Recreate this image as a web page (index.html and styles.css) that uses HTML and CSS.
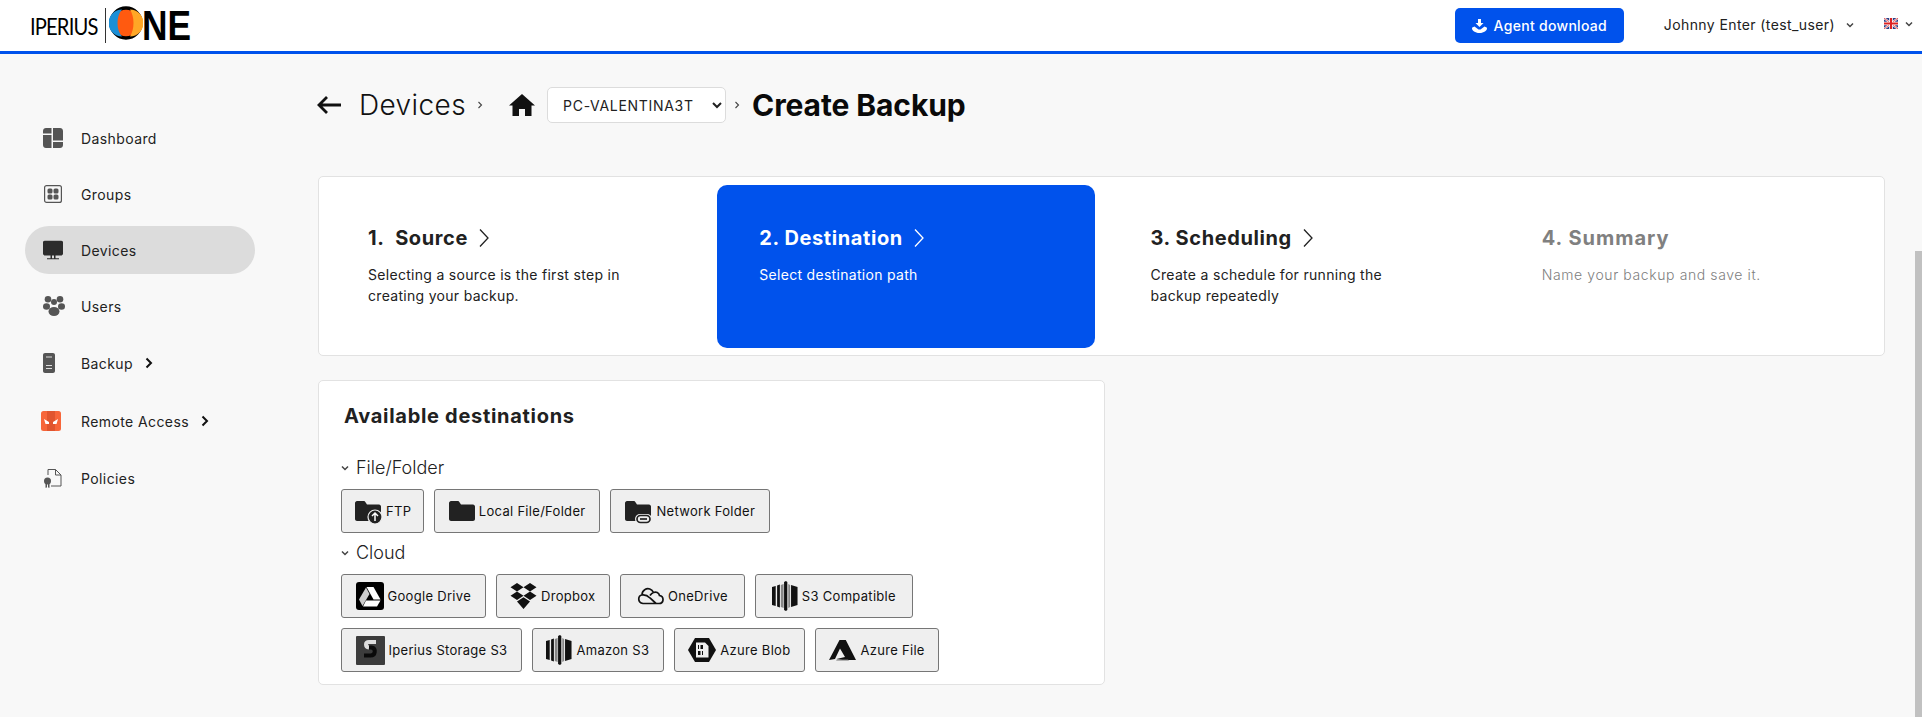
FILE: index.html
```html
<!DOCTYPE html>
<html lang="en">
<head>
  <meta charset="UTF-8" />
  <meta name="viewport" content="width=device-width, initial-scale=1.0"/>
  <title>Iperius One - Create Backup</title>
  <link rel="stylesheet" href="styles.css">
</head>
<body>
  <svg class="sprites" aria-hidden="true">
    <symbol id="s3" viewBox="0 0 28 30" preserveAspectRatio="none">
      <path fill="#111" d="M0 6l4-1v20l-4-1zM5.500 4.500l3-1v23l-3-1z"/>
      <path fill="#888" d="M9.500 4l3-1v24l-3-1z"/>
      <path fill="#111" d="M13 1l2-1 1.500 1v28l-1.500 1-2-1z"/>
      <path fill="#888" d="M17.500 3l2 1v22l-2 1z"/>
      <path fill="#111" d="M20.500 4l7 2v18l-7 2z"/>
    </symbol>
    <symbol id="tiny-down" viewBox="0 0 10 10">
      <path fill="none" stroke="currentColor" stroke-width="1.500" d="M2 3.500l3 3 3-3"/>
    </symbol>
    <symbol id="tiny-right" viewBox="0 0 10 10">
      <path fill="none" stroke="currentColor" stroke-width="1.100" d="M3.500 2l3 3-3 3"/>
    </symbol>
    <symbol id="step-arrow" viewBox="0 0 12 20">
      <path fill="none" stroke="currentColor" stroke-width="1.300" d="M2 1.500l8 8.500-8 8.500"/>
    </symbol>
    <symbol id="nav-arrow" viewBox="0 0 8 12">
      <path fill="none" stroke="currentColor" stroke-width="2" d="M1.500 1.500L6 6l-4.500 4.500"/>
    </symbol>
    <symbol id="folder" viewBox="0 0 26 20">
      <path fill="#222" d="M2 0h6.500c1 0 1.500.5 2 1.200L12 3.500h12c1 0 2 1 2 2V18c0 1-1 2-2 2H2c-1 0-2-1-2-2V2C0 1 1 0 2 0z"/>
    </symbol>
  </svg>

  <div class="topbar">
    <a class="logo" href="#">
      <span class="logo-small">IPERIUS</span>
      <span class="logo-divider"></span>
      <svg class="logo-mark" width="34" height="34" viewBox="0 0 34 34">
        <circle cx="17" cy="17" r="15" fill="#ff5a10" stroke="#000" stroke-width="3.500"/>
        <path fill="#1b8fd6" d="M13 3.500a13.500 13.500 0 0 0 0 27c-3-3.500-4.500-8-4.500-13.500S10 7 13 3.500z"/>
        <path fill="#ffa726" d="M21 3.500a13.500 13.500 0 0 1 0 27c2-3.500 3.500-8 3.500-13.500S23 7 21 3.500z"/>
      </svg>
      <span class="logo-big">NE</span>
    </a>
    <div class="topbar-right">
      <button class="agent-btn">
        <svg width="15" height="14" viewBox="0 0 15 14">
          <path fill="#fff" d="M6 0h3v4h2.500L7.500 8 3.500 4H6zM0 9.500C0 8.500 1 8 2.500 7.500L6.500 10.500h2L12.500 7.500C14 8 15 8.500 15 9.500c0 2-3 4.500-7.500 4.500S0 11.500 0 9.500z"/>
        </svg>
        Agent download
      </button>
      <a class="user-menu" href="#">Johnny Enter (test_user)
        <svg class="tiny" width="10" height="10"><use href="#tiny-down"/></svg>
      </a>
      <a class="lang-menu" href="#">
        <svg width="14" height="11" viewBox="0 0 14 11">
          <rect width="14" height="11" fill="#2b3f86"/>
          <path stroke="#fff" stroke-width="2" d="M0 0l14 11M14 0L0 11"/>
          <path stroke="#d22" stroke-width=".8" d="M0 0l14 11M14 0L0 11"/>
          <path stroke="#fff" stroke-width="3.600" d="M7 0v11M0 5.500h14"/>
          <path stroke="#d22" stroke-width="2" d="M7 0v11M0 5.500h14"/>
        </svg>
        <svg class="tiny" width="10" height="10"><use href="#tiny-down"/></svg>
      </a>
    </div>
  </div>

  <div class="layout">
    <div class="sidebar">
      <a class="nav-item" href="#">
        <svg class="nav-icon" width="20" height="20" viewBox="0 0 20 20">
          <path fill="#555" d="M3 0h5.500v5.500H0V3c0-1.700 1.300-3 3-3zM0 7h8.500v13H3c-1.700 0-3-1.300-3-3zM10 0h7c1.700 0 3 1.300 3 3v9.500H10zM10 14h10v3c0 1.700-1.300 3-3 3h-7z"/>
        </svg>
        Dashboard
      </a>
      <a class="nav-item" href="#">
        <svg class="nav-icon" width="20" height="18" viewBox="0 0 20 18">
          <rect x="1.600" y=".6" width="16.800" height="16.800" rx="2" fill="none" stroke="#555" stroke-width="1.200"/>
          <rect x="4.500" y="3.500" width="5" height="5" rx="1.500" fill="#555"/>
          <rect x="10.500" y="3.500" width="5" height="5" rx="1.500" fill="#555"/>
          <rect x="4.500" y="9.500" width="5" height="5" rx="1.500" fill="#555"/>
          <rect x="10.500" y="9.500" width="5" height="5" rx="1.500" fill="#555"/>
        </svg>
        Groups
      </a>
      <a class="nav-item active" href="#">
        <svg class="nav-icon" width="20" height="19" viewBox="0 0 20 19">
          <path fill="#2c2c2c" d="M2 0h16c1.100 0 2 .9 2 2v11c0 1.100-.9 2-2 2H2c-1.100 0-2-.9-2-2V2C0 .9.900 0 2 0zM7.500 15h1.500v3H7.500zM11 15h1.500v3H11zM4 17.700h12V19H4z"/>
        </svg>
        Devices
      </a>
      <a class="nav-item" href="#">
        <svg class="nav-icon" width="22" height="20" viewBox="0 0 22 20">
          <g fill="#555">
            <circle cx="5" cy="3.300" r="3.300"/>
            <circle cx="17" cy="3.300" r="3.300"/>
            <circle cx="11" cy="6" r="3"/>
            <ellipse cx="3.500" cy="10.500" rx="3.500" ry="3.200"/>
            <ellipse cx="18.500" cy="10.500" rx="3.500" ry="3.200"/>
            <ellipse cx="11" cy="15.500" rx="5.500" ry="4.500"/>
          </g>
        </svg>
        Users
      </a>
      <a class="nav-item tall" href="#">
        <svg class="nav-icon" width="12" height="20" viewBox="0 0 12 20">
          <path fill="#555" d="M2 0h8c1.100 0 2 .9 2 2v16c0 1.100-.9 2-2 2H2c-1.100 0-2-.9-2-2V2C0 .9.900 0 2 0z"/>
          <path stroke="#ddd" stroke-width="1" d="M3 4h6M3 12.500h6M3 15.500h6"/>
        </svg>
        Backup
        <svg class="nav-arrow" width="8" height="12"><use href="#nav-arrow"/></svg>
      </a>
      <a class="nav-item tall" href="#">
        <svg class="nav-icon orange" width="20" height="20" viewBox="0 0 20 20">
          <rect width="20" height="20" rx="2.500" fill="#f7663a"/>
          <rect x="6" width="8" height="20" fill="#e0552f"/>
          <path fill="#fff" d="M3 8l5 3v2H4.500zM17 8l-5 3v2h3.500z"/>
        </svg>
        Remote Access
        <svg class="nav-arrow" width="8" height="12"><use href="#nav-arrow"/></svg>
      </a>
      <a class="nav-item" href="#">
        <svg class="nav-icon" width="20" height="20" viewBox="0 0 20 20">
          <path fill="none" stroke="#555" stroke-width="1" d="M5 7V1.500h7.500l5.500 5.500v11h-10M12.500 1.500V7H18"/>
          <circle cx="4.500" cy="13" r="3.500" fill="#555"/>
          <path fill="#555" d="M2.500 16h1.500v4l-.8-.7-.7.7zM5 16h1.500v4l-.7-.7-.8.7z"/>
        </svg>
        Policies
      </a>
    </div>

    <div class="content">
      <div class="crumbs">
        <svg class="back" width="25" height="20" viewBox="0 0 25 20">
          <path fill="none" stroke="#111" stroke-width="2.800" d="M25 10H3M11 2l-8 8 8 8"/>
        </svg>
        <span class="crumb-title">Devices</span>
        <svg class="tiny sep-a" width="10" height="10"><use href="#tiny-right"/></svg>
        <svg class="home" width="26" height="22" viewBox="0 0 26 22">
          <path fill="#111" d="M13 0l13 11.500h-3.500V22H16v-7h-6v7H3.500V11.500H0z"/>
        </svg>
        <select class="device-select">
          <option>PC-VALENTINA3T</option>
        </select>
        <svg class="tiny sep-b" width="10" height="10"><use href="#tiny-right"/></svg>
        <span class="crumb-current">Create Backup</span>
      </div>

      <div class="steps">
        <div class="step">
          <h3>1.&nbsp; Source <svg width="12" height="20"><use href="#step-arrow"/></svg></h3>
          <p>Selecting a source is the first step in<br>creating your backup.</p>
        </div>
        <div class="step active">
          <h3>2. Destination <svg width="12" height="20"><use href="#step-arrow"/></svg></h3>
          <p>Select destination path</p>
        </div>
        <div class="step">
          <h3>3. Scheduling <svg width="12" height="20"><use href="#step-arrow"/></svg></h3>
          <p>Create a schedule for running the<br>backup repeatedly</p>
        </div>
        <div class="step muted">
          <h3>4. Summary</h3>
          <p>Name your backup and save it.</p>
        </div>
      </div>

      <div class="dest-card">
        <h2>Available destinations</h2>

        <div class="dest-head">
          <svg class="tiny" width="10" height="10"><use href="#tiny-down"/></svg>
          File/Folder
        </div>
        <div class="dest-list">
          <button class="dest-btn narrow">
            <svg width="28" height="28" viewBox="0 0 28 28">
              <use href="#folder" x="1" y="4" width="26" height="20"/>
              <circle cx="21" cy="20" r="7" fill="#222" stroke="#efefef" stroke-width="1.200"/>
              <path fill="none" stroke="#fff" stroke-width="1.500" d="M21 24v-7.500M18 19l3-3 3 3"/>
            </svg>
            FTP
          </button>
          <button class="dest-btn">
            <svg width="26" height="20" viewBox="0 0 26 20"><use href="#folder"/></svg>
            Local File/Folder
          </button>
          <button class="dest-btn">
            <svg width="28" height="28" viewBox="0 0 28 28">
              <use href="#folder" x="1" y="4" width="26" height="20"/>
              <rect x="11" y="17" width="17" height="10" rx="5" fill="#efefef"/>
              <rect x="13" y="18.500" width="13" height="7" rx="3.500" fill="none" stroke="#222" stroke-width="1.700"/>
              <path stroke="#222" stroke-width="1.700" d="M16 22h7"/>
            </svg>
            Network Folder
          </button>
        </div>

        <div class="dest-head">
          <svg class="tiny" width="10" height="10"><use href="#tiny-down"/></svg>
          Cloud
        </div>
        <div class="dest-list">
          <button class="dest-btn">
            <svg width="28" height="28" viewBox="0 0 28 28">
              <rect width="28" height="28" rx="3" fill="#000"/>
              <path fill="#fff" d="M10.500 5h7l7 12.500h-7z"/>
              <path fill="#ccc" d="M10 5.500l3.500 6.500-7 12-3.500-6.500z"/>
              <path fill="#fff" d="M10 18.500h14.500l-3.500 6H7z"/>
            </svg>
            Google Drive
          </button>
          <button class="dest-btn">
            <svg width="27" height="26" viewBox="0 0 27 26">
              <path fill="#111" d="M7 0l6.500 4.200L7 8.500.500 4.200zM20 0l6.500 4.200L20 8.500l-6.500-4.300zM7 8.500l6.500 4.300L7 17 .500 12.800zM20 8.500l6.500 4.300L20 17l-6.500-4.200zM7 18.500l6.500-4.200 6.500 4.200-6.500 7.500z"/>
            </svg>
            Dropbox
          </button>
          <button class="dest-btn wide">
            <svg width="27" height="18" viewBox="0 0 27 18">
              <path fill="none" stroke="#111" stroke-width="1.700" d="M6 16.500H22c5 0 5.500-7 .5-8-.5-3-3.500-4-6-3C15 2 11 .5 8 2.500 5.500 4 5 6.500 5 8c-4 .5-5 7.500 1 8.500zM5 8c4-.5 6 1 8 3l6 5.500M16.500 5.500c-1.500.5-2.500 1.500-3.500 3"/>
            </svg>
            OneDrive
          </button>
          <button class="dest-btn wide">
            <svg width="26" height="30"><use href="#s3"/></svg>
            S3 Compatible
          </button>
          <button class="dest-btn">
            <svg width="29" height="29" viewBox="0 0 29 29">
              <rect width="29" height="29" rx="1" fill="#3c3c3c"/>
              <path fill="none" stroke="#ddd" stroke-width="4" d="M20 6h-7c-4 0-4 5 0 5.500"/>
              <path fill="none" stroke="#0a0a0a" stroke-width="4" d="M13 11.500h2.500c5 1 4 8-1 8H8"/>
            </svg>
            Iperius Storage S3
          </button>
          <button class="dest-btn">
            <svg width="26" height="30"><use href="#s3"/></svg>
            Amazon S3
          </button>
          <button class="dest-btn">
            <svg width="28" height="24" viewBox="0 0 28 24">
              <path fill="#111" d="M7 0h14l7 12-7 12H7L0 12z"/>
              <path fill="#efefef" d="M8 4.500h9l3.500 3.500v11.500H8z"/>
              <path fill="#111" d="M10 7h1v4h-1zM12.500 7h2.500v4h-2.500zM10 13h2.500v4H10zM14 13h1v4h-1z"/>
            </svg>
            Azure Blob
          </button>
          <button class="dest-btn">
            <svg width="27" height="21" viewBox="0 0 27 21">
              <path fill="#111" d="M10.500 0h6.300L27 20H13.500l-6-1 8.500-2-5-8.500L6 19 0 20z"/>
              <path fill="#777" d="M7 20.500h13l-1-1H8z"/>
            </svg>
            Azure File
          </button>
        </div>
      </div>
    </div>
  </div>

  <div class="scroll-thumb"></div>
</body>
</html>
```

FILE: styles.css
```css
html, body {
  height: 100%;
}

body {
  margin: 0;
  font-family: 'Inter', 'Open Sans', sans-serif;
  background: #f8f8f8;
  color: #212121;
  overflow: hidden;
}

a {
  color: inherit;
  text-decoration: none;
}

.sprites {
  display: none;
}

.tiny {
  color: #444;
  flex-shrink: 0;
}

/* top bar */
.topbar {
  height: 51px;
  background: #fff;
  border-bottom: 3px solid #0052ec;
  display: flex;
  align-items: center;
  justify-content: space-between;
  padding: 0 8px 0 30px;
}

.logo {
  display: flex;
  align-items: center;
  height: 51px;
  color: #000;
}

.logo-small {
  font-family: 'Lato', sans-serif;
  font-size: 24px;
  line-height: 24px;
  letter-spacing: -1px;
  transform: scaleX(0.84);
  transform-origin: left center;
  width: 71px;
  white-space: nowrap;
  margin-top: 0;
}

.logo-divider {
  width: 1px;
  height: 35px;
  background: #333;
  margin: 0 3px 0 4px;
}

.logo-mark {
  flex-shrink: 0;
  margin-top: -5px;
}

.logo-big {
  font-family: 'Liberation Sans', sans-serif;
  font-size: 43px;
  line-height: 40px;
  font-weight: 700;
  transform: scaleX(0.82);
  transform-origin: left center;
  margin-left: -1px;
  margin-top: -1.500px;
}

.topbar-right {
  display: flex;
  align-items: center;
}

.agent-btn {
  display: flex;
  align-items: center;
  gap: 7px;
  width: 169px;
  height: 35px;
  justify-content: center;
  background: #0052ec;
  color: #fff;
  border: none;
  border-radius: 5px;
  font-family: inherit;
  font-size: 14px;
  font-weight: 500;
  letter-spacing: 0.3px;
  margin-right: 40px;
}

.user-menu {
  display: flex;
  align-items: center;
  gap: 10px;
  font-size: 14px;
  letter-spacing: 0.4px;
  margin-top: -2px;
  margin-right: 29px;
}

.lang-menu {
  display: flex;
  align-items: center;
  gap: 6px;
  margin-top: -4px;
}

/* sidebar */
.layout {
  display: flex;
}

.sidebar {
  width: 318px;
  flex-shrink: 0;
  box-sizing: border-box;
  padding: 60px 0 0 25px;
}

.nav-item {
  display: flex;
  align-items: center;
  width: 230px;
  height: 48px;
  margin-bottom: 8px;
  border-radius: 24px;
  font-size: 14px;
  letter-spacing: 0.4px;
  color: #222;
  position: relative;
  padding-left: 56px;
  box-sizing: border-box;
}

.nav-item.tall {
  height: 50px;
}

.nav-item.active {
  background: #dcdcdc;
}

.nav-icon {
  position: absolute;
  left: 18px;
  top: 50%;
  transform: translateY(-50%);
}

.nav-icon.orange {
  left: 16px;
}

.nav-arrow {
  margin-left: 12px;
  color: #111;
}

/* main column */
.content {
  flex: 1;
  padding-right: 37px;
  min-width: 0;
}

.crumbs {
  display: flex;
  align-items: center;
  height: 36px;
  margin-top: 33px;
  margin-bottom: 53px;
}

.back {
  margin-left: -2px;
  margin-right: 18px;
}

.crumb-title {
  font-size: 28px;
  font-weight: 300;
  letter-spacing: 0.4px;
  color: #111;
}

.sep-a {
  margin-left: 9px;
  margin-right: 24px;
}

.home {
  margin-right: 12px;
}

.device-select {
  width: 179px;
  height: 36px;
  background: #fff;
  border: 1px solid #dcdcdc;
  border-radius: 5px;
  padding: 0 6px 0 11px;
  font-family: inherit;
  font-size: 14px;
  letter-spacing: 0.7px;
  color: #212121;
}

.sep-b {
  margin-left: 6px;
  margin-right: 10px;
}

.crumb-current {
  font-size: 30px;
  font-weight: 700;
  letter-spacing: -0.1px;
  color: #0a0a0a;
}

/* wizard steps */
.steps {
  display: grid;
  grid-template-columns: repeat(4, 1fr);
  height: 180px;
  box-sizing: border-box;
  background: #fff;
  border: 1px solid #e2e2e2;
  border-radius: 5px;
  margin-bottom: 24px;
}

.step {
  margin: 8px 7px 7px 7px;
  padding: 41px 0 0 42px;
  border-radius: 10px;
  color: #212121;
}

.step h3 {
  display: flex;
  align-items: center;
  gap: 10px;
  margin: 0 0 14px;
  font-size: 20px;
  font-weight: 700;
  letter-spacing: 0.6px;
  line-height: 24px;
}

.step p {
  margin: 0;
  font-size: 14px;
  line-height: 21px;
  letter-spacing: 0.3px;
}

.step.active {
  background: #0052ec;
  color: #fff;
}

.step.muted {
  color: #808080;
}

.step.muted h3 {
  letter-spacing: 1px;
}

.step.muted p {
  font-weight: 300;
  letter-spacing: 0.6px;
}

/* destinations */
.dest-card {
  width: 787px;
  height: 305px;
  box-sizing: border-box;
  background: #fff;
  border: 1px solid #e2e2e2;
  border-radius: 5px;
  padding: 22px 14px 0 21px;
}

.dest-card h2 {
  margin: 0 0 27px 4px;
  font-size: 20px;
  font-weight: 700;
  letter-spacing: 0.7px;
  line-height: 26px;
}

.dest-head {
  display: flex;
  align-items: center;
  gap: 6px;
  font-size: 18px;
  font-weight: 300;
  line-height: 24px;
  color: #212121;
  margin: 0 0 9px 0;
}

.dest-list {
  display: flex;
  flex-wrap: wrap;
  gap: 10px;
  margin-bottom: 8px;
  margin-left: 1px;
}

.dest-btn {
  display: flex;
  align-items: center;
  gap: 4px;
  height: 44px;
  padding: 0 13.5px;
  background: #efefef;
  border: 1px solid #767676;
  border-radius: 3px;
  font-family: inherit;
  font-size: 13px;
  letter-spacing: 0.3px;
  color: #111;
}

.dest-btn.narrow {
  padding: 0 12px;
}

.dest-btn.wide {
  padding: 0 16px;
}

.scroll-thumb {
  position: fixed;
  right: 0;
  top: 251px;
  bottom: 0;
  width: 7px;
  background: #c1c1c1;
}
```
